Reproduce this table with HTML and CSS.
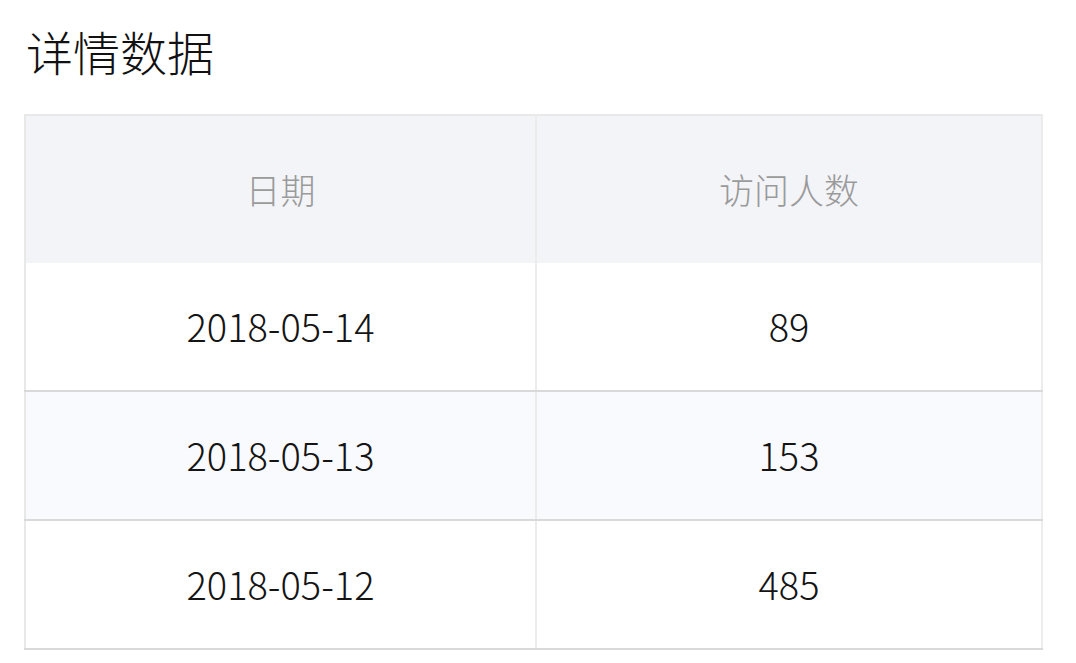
FILE: index.html
```html
<!DOCTYPE html>
<html lang="zh-CN">
<head>
<meta charset="utf-8">
<title>详情数据</title>
<link rel="stylesheet" href="styles.css">
</head>
<body>
<main class="page">
  <h1 class="title">详情数据</h1>
  <table class="data">
    <colgroup><col class="c1"><col class="c2"></colgroup>
    <thead>
      <tr><th>日期</th><th>访问人数</th></tr>
    </thead>
    <tbody>
      <tr><td>2018-05-14</td><td>89</td></tr>
      <tr class="alt"><td>2018-05-13</td><td>153</td></tr>
      <tr><td>2018-05-12</td><td>485</td></tr>
    </tbody>
  </table>
</main>
</body>
</html>
```

FILE: styles.css
```css
html, body {
  margin: 0;
  padding: 0;
  background: #ffffff;
}
body {
  font-family: "Noto Sans CJK SC", "Noto Sans", sans-serif;
  color: #111111;
}
.page {
  padding: 18px 33px 0 24px;
}
.title {
  margin: 0 0 30px 2px;
  font-size: 47px;
  line-height: 66px;
  font-weight: 300;
  color: #111;
}
.data {
  width: 1019px;
  border-collapse: collapse;
  table-layout: fixed;
  border: 2px solid #e8e8e8;
  border-bottom-color: #d9d9d9;
}
.c1 { width: 511px; }
.data th,
.data td {
  text-align: center;
  font-weight: 300;
  padding: 0;
  border-right: 2px solid #ececec;
}
.data th {
  height: 145px;
  padding-bottom: 2px;
  background: #f3f4f8;
  color: #9a9a9a;
  font-size: 35px;
}
.data td {
  height: 124px;
  padding-bottom: 3px;
  font-size: 38px;
  color: #141414;
  border-bottom: 2px solid #d9d9d9;
}
.data tr.alt td {
  background: #f9fafd;
}
```
